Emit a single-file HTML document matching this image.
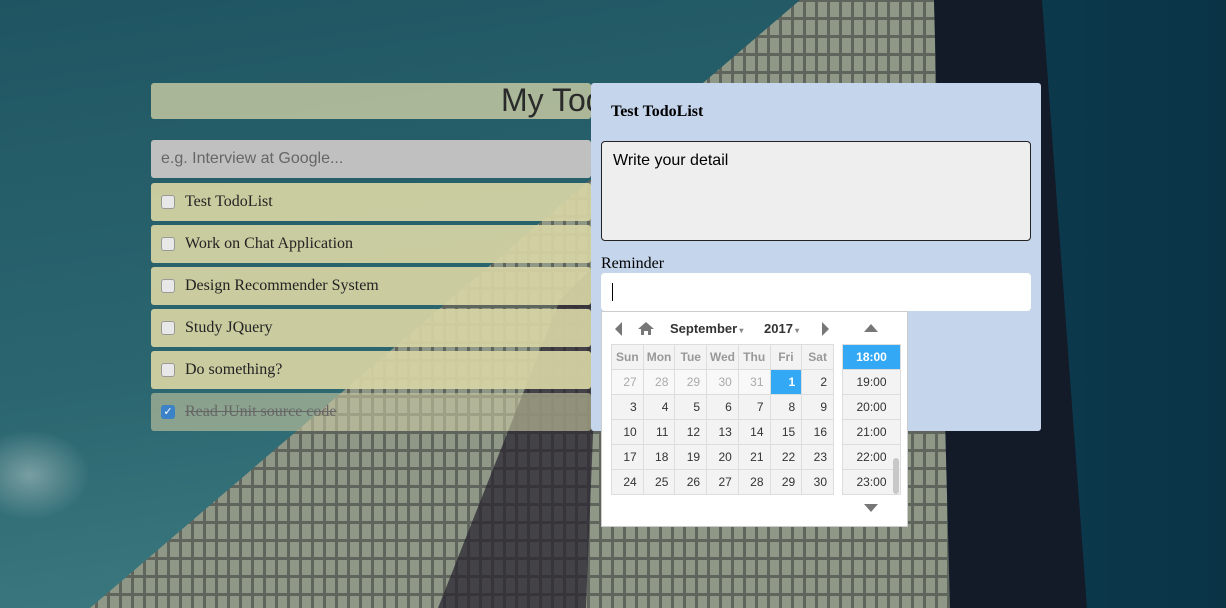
<!DOCTYPE html>
<html><head><style>
*{box-sizing:border-box;margin:0;padding:0}
body{width:1226px;height:608px;overflow:hidden;position:relative;font-family:"Liberation Serif",serif;background:#2a5e69}
.abs{position:absolute}
.bar{position:absolute;left:151px;width:440px;height:38px;background:rgba(214,212,164,.93);border-radius:3px}
.bar .cb{position:absolute;left:10px;top:12px;width:14px;height:14px;border:1px solid #999;border-radius:3px;background:#e8e8e8}
.bar span{position:absolute;left:34px;top:10px;font-size:16px;color:#222}
table{border-collapse:collapse;font-family:"Liberation Sans",sans-serif;font-size:12px;table-layout:fixed;width:223px}
td{border:1px solid #ddd;background:#f3f3f3;height:25px;text-align:right;padding-right:6px;color:#333}
th{border:1px solid #ddd;background:#f3f3f3;height:25px;color:#999;font-weight:bold}
.o{color:#aaa;background:#f8f8f8}
.tl div{height:25px;border-bottom:1px solid #ddd;background:#f3f3f3;font-family:"Liberation Sans",sans-serif;font-size:12px;color:#333;text-align:center;line-height:25px}
</style></head><body>
<svg class="abs" style="left:0;top:0" width="1226" height="608">
<defs>
<linearGradient id="s" x1="0" y1="0" x2="0.3" y2="1"><stop offset="0" stop-color="#1f5562"/><stop offset=".6" stop-color="#2b6670"/><stop offset="1" stop-color="#3c7a80"/></linearGradient>
<linearGradient id="r" x1="0" y1="0" x2="1" y2="0"><stop offset="0" stop-color="#0c3a4e"/><stop offset="1" stop-color="#0a3346"/></linearGradient>
<pattern id="g" width="12" height="18" patternUnits="userSpaceOnUse"><rect width="12" height="18" fill="#5f655c"/><rect x="2" y="2" width="9" height="15" fill="#8f9787"/></pattern>
<radialGradient id="c"><stop offset="0" stop-color="#a8c0c0" stop-opacity=".6"/><stop offset="1" stop-color="#a8c0c0" stop-opacity="0"/></radialGradient>
</defs>
<rect width="1226" height="608" fill="url(#s)"/>
<rect x="1000" width="226" height="608" fill="url(#r)"/>
<polygon points="800,0 934,0 950,608 90,608" fill="url(#g)"/>
<polygon points="560,300 600,260 586,608 438,608" fill="#2a2530" opacity=".75"/>
<polygon points="934,0 1042,0 1087,608 950,608" fill="#141b28"/>
<ellipse cx="30" cy="475" rx="60" ry="45" fill="url(#c)"/>
</svg>
<div class="abs" style="left:151px;top:83px;width:440px;height:36px;background:rgba(178,188,155,.95);border-radius:3px;overflow:hidden"><span style="position:absolute;left:350px;top:-1px;font:32px 'Liberation Sans',sans-serif;color:#2a2a2a;white-space:nowrap">My Todo</span></div>
<div class="abs" style="left:151px;top:140px;width:440px;height:38px;background:#c0c0c0;border-radius:3px;font:16px 'Liberation Sans',sans-serif;color:#666;padding:10px 10px">e.g. Interview at Google...</div>
<div class="bar" style="top:183px"><div class="cb"></div><span>Test TodoList</span></div>
<div class="bar" style="top:225px"><div class="cb"></div><span>Work on Chat Application</span></div>
<div class="bar" style="top:267px"><div class="cb"></div><span>Design Recommender System</span></div>
<div class="bar" style="top:309px"><div class="cb"></div><span>Study JQuery</span></div>
<div class="bar" style="top:351px"><div class="cb"></div><span>Do something?</span></div>
<div class="bar" style="top:393px;background:rgba(200,200,160,.6)"><div class="cb" style="background:#3b82c8;border-color:#3b82c8;color:#fff;font-size:11px;line-height:12px;text-align:center">✓</div><span style="color:#666;text-decoration:line-through">Read JUnit source code</span></div>
<div class="abs" style="left:591px;top:83px;width:450px;height:348px;background:#c5d5eb;border-radius:3px">
<div class="abs" style="left:20px;top:20px;font-weight:bold;font-size:16px">Test TodoList</div>
<div class="abs" style="left:10px;top:58px;width:430px;height:100px;background:#eee;border:1px solid #222;border-radius:4px;font:16px 'Liberation Sans',sans-serif;padding:10px 11px">Write your detail</div>
<div class="abs" style="left:10px;top:172px;font-size:16px">Reminder</div>
<div class="abs" style="left:10px;top:190px;width:430px;height:38px;background:#fff;border-radius:4px"><div class="abs" style="left:11px;top:10px;width:1px;height:18px;background:#000"></div></div>
</div>
<div class="abs" style="left:601px;top:311px;width:307px;height:216px;background:#fff;border:1px solid #ccc">
<svg class="abs" style="left:12px;top:10px" width="10" height="14"><polygon points="8,0 8,14 1,7" fill="#777"/></svg>
<svg class="abs" style="left:36px;top:10px" width="16" height="14"><polygon points="8,0 16,7 13,7 13,13 10,13 10,9 6,9 6,13 3,13 3,7 0,7" fill="#777"/></svg>
<div class="abs" style="left:68px;top:9px;font:bold 13px 'Liberation Sans',sans-serif;color:#333">September<span style="font-size:8px;color:#888"> ▾</span></div>
<div class="abs" style="left:162px;top:9px;font:bold 13px 'Liberation Sans',sans-serif;color:#333">2017<span style="font-size:8px;color:#888"> ▾</span></div>
<svg class="abs" style="left:219px;top:10px" width="10" height="14"><polygon points="1,0 1,14 8,7" fill="#777"/></svg>
<svg class="abs" style="left:262px;top:12px" width="14" height="8"><polygon points="0,8 14,8 7,0" fill="#777"/></svg>
<svg class="abs" style="left:262px;top:192px" width="14" height="8"><polygon points="0,0 14,0 7,8" fill="#777"/></svg>
<table class="abs" style="left:9px;top:32px">
<tr><th>Sun</th><th>Mon</th><th>Tue</th><th>Wed</th><th>Thu</th><th>Fri</th><th>Sat</th></tr>
<tr><td class="o">27</td><td class="o">28</td><td class="o">29</td><td class="o">30</td><td class="o">31</td><td style="background:#33a8f5;color:#fff;font-weight:bold">1</td><td>2</td></tr>
<tr><td>3</td><td>4</td><td>5</td><td>6</td><td>7</td><td>8</td><td>9</td></tr>
<tr><td>10</td><td>11</td><td>12</td><td>13</td><td>14</td><td>15</td><td>16</td></tr>
<tr><td>17</td><td>18</td><td>19</td><td>20</td><td>21</td><td>22</td><td>23</td></tr>
<tr><td>24</td><td>25</td><td>26</td><td>27</td><td>28</td><td>29</td><td>30</td></tr>
</table>
<div class="abs tl" style="left:240px;top:32px;width:59px;height:151px;border:1px solid #ddd;overflow:hidden">
<div style="background:#33a8f5;color:#fff;font-weight:bold">18:00</div><div>19:00</div><div>20:00</div><div>21:00</div><div>22:00</div><div>23:00</div>
</div>
<div class="abs" style="left:291px;top:146px;width:6px;height:36px;background:#c8c8c8;border-radius:3px"></div>
</div>
</body></html>
